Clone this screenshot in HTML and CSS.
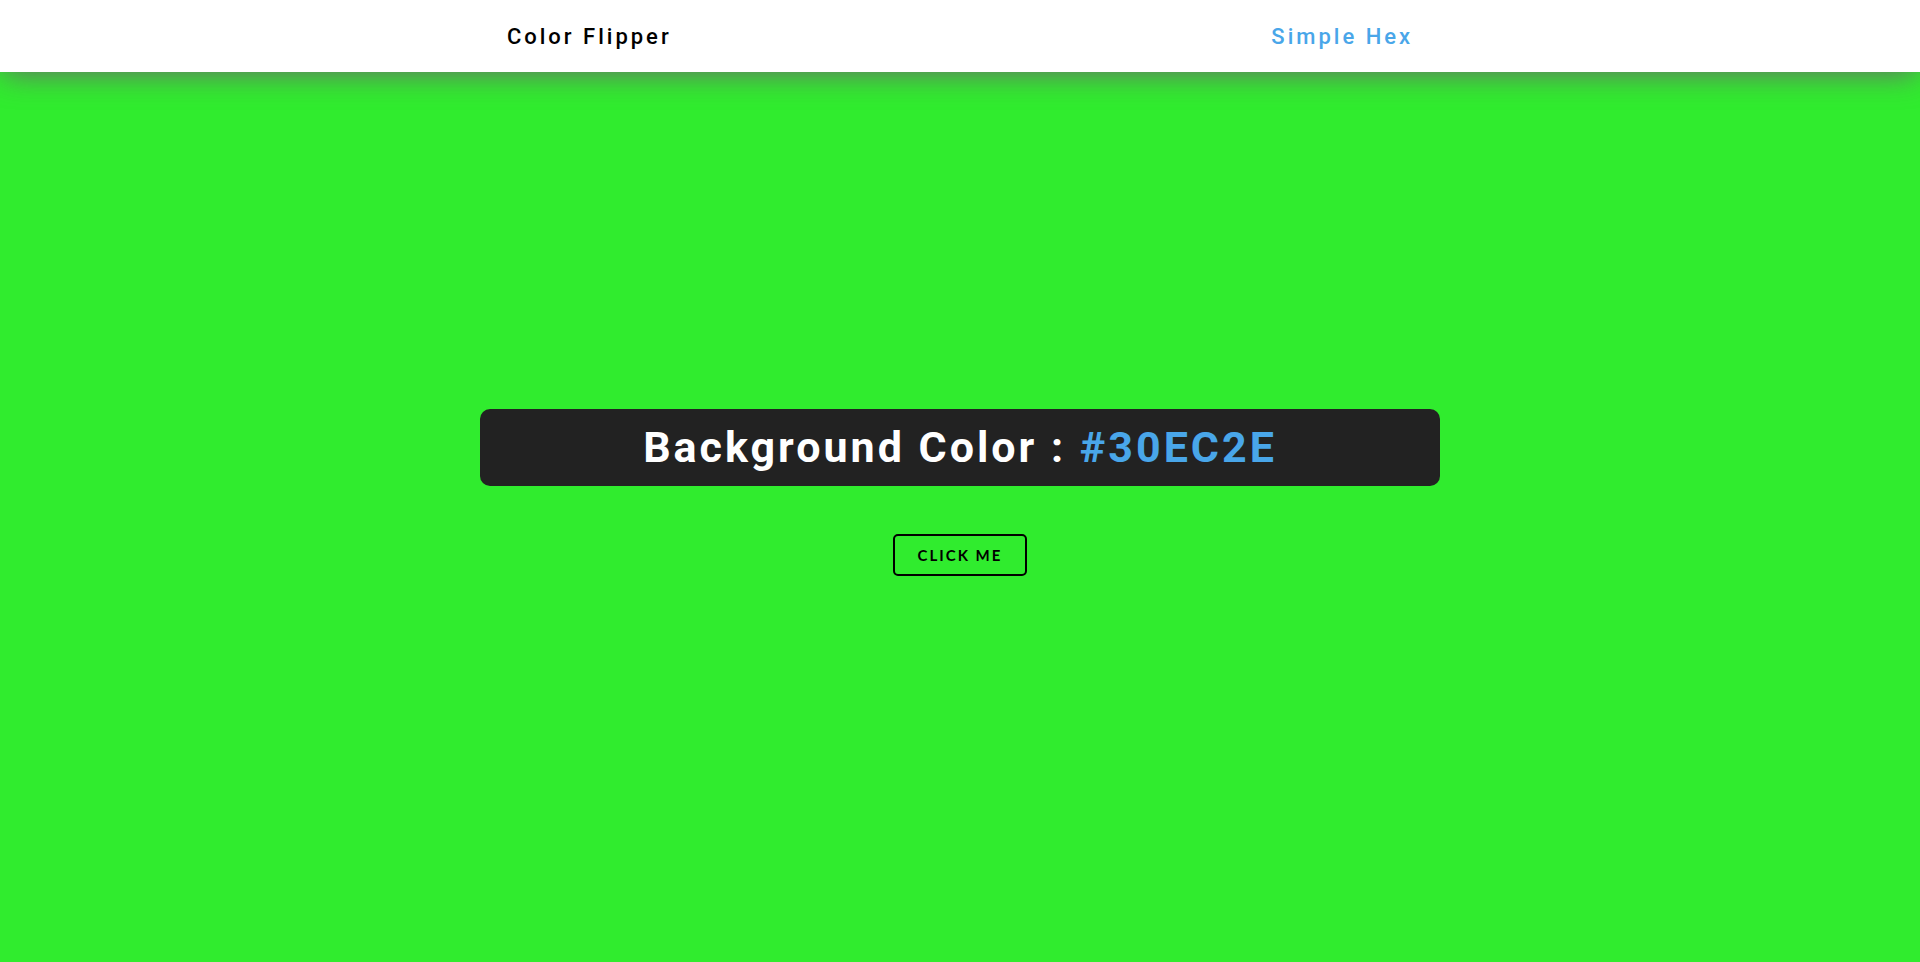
FILE: index.html
```html
<!DOCTYPE html>
<html lang="en">
<head>
<meta charset="utf-8">
<meta name="viewport" content="width=device-width, initial-scale=1">
<title>Color Flipper</title>
<link rel="stylesheet" href="styles.css">
</head>
<body>
<nav class="navbar">
  <div class="nav-center">
    <h4 class="brand">Color Flipper</h4>
    <a class="nav-link" href="#">Simple Hex</a>
  </div>
</nav>
<main class="main">
  <h2 class="banner">Background Color : <span class="color">#30EC2E</span></h2>
  <button class="btn" type="button">Click me</button>
</main>
</body>
</html>
```
FILE: styles.css
```css
* { box-sizing: border-box; margin: 0; padding: 0; }
body {
  min-height: 100vh;
  display: flex;
  flex-direction: column;
  background: #30ec2e;
  font-family: Roboto, sans-serif;
  color: #222;
}
.navbar {
  padding: 24px 0 22px;
  display: flex;
  align-items: center;
  justify-content: center;
  background: #fff;
  box-shadow: 0 5px 30px -3px #696969;
}
.nav-center {
  width: 47.2%;
  display: flex;
  align-items: center;
  justify-content: space-between;
}
.brand, .nav-link {
  font-size: 22px;
  line-height: 26px;
  font-weight: 500;
  letter-spacing: 3px;
  color: #000;
  text-decoration: none;
}
.nav-link { color: #49a6e9; }
.main {
  flex: 1;
  padding-bottom: 49px;
  display: flex;
  flex-direction: column;
  align-items: center;
  justify-content: center;
  gap: 48px;
}
.banner {
  width: 50%;
  padding: 12px;
  border-radius: 10px;
  background: #222;
  color: #fff;
  text-align: center;
  font-size: 43px;
  line-height: 53px;
  font-weight: 700;
  letter-spacing: 3px;
}
.color { color: #49a6e9; }
.btn {
  padding: 10px 23px;
  border: 2px solid #000;
  border-radius: 5px;
  background: transparent;
  color: #000;
  font-family: Lato, sans-serif;
  font-size: 15px;
  line-height: 18px;
  font-weight: 700;
  letter-spacing: 2px;
  text-transform: uppercase;
}
```
